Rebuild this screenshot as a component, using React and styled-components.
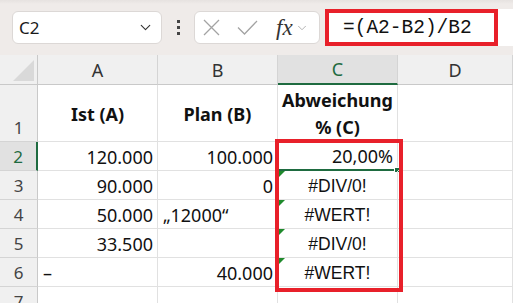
import React from "react";
import styled, { createGlobalStyle } from "styled-components";
import { ChevronDown } from "lucide-react";

const GlobalStyle = createGlobalStyle`
  html, body {
    margin: 0;
    padding: 0;
    width: 513px;
    height: 303px;
    overflow: hidden;
    background: #ffffff;
    font-family: "Noto Sans", "Open Sans", sans-serif;
  }
`;

const Page = styled.div`
  width: 513px;
  height: 303px;
  overflow: hidden;
  display: flex;
  flex-direction: column;
`;

const Toolbar = styled.div`
  height: 55px;
  flex: none;
  box-sizing: border-box;
  background: linear-gradient(#e6e2e0 0, #efebe9 4px, #efebe9 100%);
  display: flex;
  align-items: center;
  padding: 0 0 0 12px;
`;

const NameBox = styled.div`
  width: 150px;
  height: 33px;
  box-sizing: border-box;
  background: #fff;
  border: 1px solid #dcd8d6;
  border-radius: 6px;
  display: flex;
  align-items: center;
  justify-content: space-between;
  padding: 0 7px 0 6px;
  font-size: 17px;
  color: #1a1a1a;
`;

const Grip = styled.div`
  width: 32px;
  display: flex;
  flex-direction: column;
  align-items: center;
  gap: 3px;

  span {
    width: 3px;
    height: 3px;
    background: #444;
  }
`;

const FnControls = styled.div`
  width: 126px;
  height: 33px;
  box-sizing: border-box;
  background: #fff;
  border: 1px solid #dcd8d6;
  border-radius: 6px;
  display: flex;
  align-items: center;
  padding: 0 0 0 8px;
  color: #a3a3a3;
  gap: 0;
`;

const Fx = styled.span`
  font-family: "Liberation Serif", serif;
  font-style: italic;
  font-size: 23px;
  color: #333;
  margin: 0 2px 0 18px;
  line-height: 1;
`;

const FormulaBar = styled.div`
  flex: 1;
  height: 37px;
  margin-left: 5px;
  background: #fff;
  display: flex;
  align-items: stretch;
`;

const FormulaText = styled.div`
  width: 173px;
  box-sizing: border-box;
  border: 4.5px solid #e8202a;
  font-family: "Liberation Mono", monospace;
  font-size: 19.5px;
  color: #111;
  display: flex;
  align-items: center;
  padding-left: 14px;
`;

const Sheet = styled.div`
  position: relative;
  flex: 1;
  display: grid;
  grid-template-columns: 38px 120px 120px 120px 1fr;
  grid-template-rows: 30px 57px repeat(6, 29px);
  background: #fff;
`;

const Corner = styled.div`
  background: #f0f0f0;
  border-right: 1px solid #c9c9c9;
  border-bottom: 1px solid #c9c9c9;
  position: relative;

  &::after {
    content: "";
    position: absolute;
    right: 3px;
    bottom: 3px;
    width: 0;
    height: 0;
    border-left: 21px solid transparent;
    border-bottom: 21px solid #d9d9d9;
  }
`;

const ColHead = styled.div`
  background: ${(p) => (p.$active ? "#e1e1e1" : "#f0f0f0")};
  border-right: 1px solid #d4d4d4;
  border-bottom: ${(p) => (p.$active ? "2px solid #1e6b40" : "1px solid #c9c9c9")};
  color: ${(p) => (p.$active ? "#1e6b40" : "#333")};
  font-size: 18px;
  display: flex;
  align-items: center;
  justify-content: center;
`;

const RowHead = styled.div`
  background: ${(p) => (p.$active ? "#e1e1e1" : "#f0f0f0")};
  border-right: ${(p) => (p.$active ? "2px solid #1e6b40" : "1px solid #c9c9c9")};
  border-bottom: 1px solid #d4d4d4;
  color: ${(p) => (p.$active ? "#1e6b40" : "#444")};
  font-size: 17px;
  line-height: 18px;
  display: flex;
  align-items: flex-end;
  justify-content: center;
  padding-bottom: 4px;
  box-sizing: border-box;
`;

const Cell = styled.div`
  position: relative;
  box-sizing: border-box;
  border-right: 1px solid #e1e1e1;
  border-bottom: 1px solid #e1e1e1;
  padding: 0 4px 4px 5px;
  display: flex;
  align-items: flex-end;
  justify-content: ${(p) =>
    p.$align === "left" ? "flex-start" : p.$align === "center" ? "center" : "flex-end"};
  font-size: 18px;
  line-height: 18px;
  color: #111;
  white-space: nowrap;
`;

const HeadCell = styled(Cell)`
  align-items: center;
  justify-content: center;
  text-align: center;
  white-space: normal;
  font-weight: 700;
  line-height: 27px;
  padding: 2px 2px 0;
`;

const ErrorCell = styled(Cell)`
  font-family: "Liberation Sans", Arial, sans-serif;
  font-size: 17.5px;
  justify-content: center;
  padding-left: 0;
  padding-right: 0;

  &::before {
    content: "";
    position: absolute;
    left: 0;
    top: 0;
    border-top: 7px solid #1f8a2c;
    border-right: 7px solid transparent;
  }
`;

const ActiveCell = styled(Cell)`
  border-bottom: 2px solid #1e6b40;

  &::after {
    content: "";
    position: absolute;
    right: -3px;
    bottom: -4px;
    width: 6px;
    height: 6px;
    background: #1e6b40;
    border: 1px solid #fff;
    box-sizing: border-box;
  }
`;

const Highlight = styled.div`
  position: absolute;
  left: 275px;
  top: 84px;
  width: 128px;
  height: 153px;
  box-sizing: border-box;
  border: 4.5px solid #e8202a;
  pointer-events: none;
`;

const CancelIcon = () => (
  <svg width="17" height="17" viewBox="0 0 17 17" fill="none" stroke="currentColor" strokeWidth="1.3">
    <path d="M1 1 16 16M16 1 1 16" />
  </svg>
);

const ConfirmIcon = () => (
  <svg width="21" height="15" viewBox="0 0 21 15" fill="none" stroke="currentColor" strokeWidth="1.3" style={{ marginLeft: 17 }}>
    <path d="M1 7.5 7.5 14 20 1" />
  </svg>
);

const rows = [
  { n: 2, a: "120.000", b: "100.000", c: "20,00%", active: true },
  { n: 3, a: "90.000", b: "0", c: "#DIV/0!" },
  { n: 4, a: "50.000", b: "„12000“", bAlign: "left", c: "#WERT!" },
  { n: 5, a: "33.500", b: "", c: "#DIV/0!" },
  { n: 6, a: "–", aAlign: "left", b: "40.000", c: "#WERT!" },
];

export default function App() {
  return (
    <Page>
      <GlobalStyle />
      <Toolbar>
        <NameBox>
          <span>C2</span>
          <ChevronDown size={17} strokeWidth={1.6} color="#333" />
        </NameBox>
        <Grip>
          <span />
          <span />
          <span />
        </Grip>
        <FnControls>
          <CancelIcon />
          <ConfirmIcon />
          <Fx>fx</Fx>
          <ChevronDown size={14} strokeWidth={1.4} />
        </FnControls>
        <FormulaBar>
          <FormulaText>=(A2-B2)/B2</FormulaText>
        </FormulaBar>
      </Toolbar>

      <Sheet>
        <Corner />
        <ColHead>A</ColHead>
        <ColHead>B</ColHead>
        <ColHead $active>C</ColHead>
        <ColHead>D</ColHead>

        <RowHead>1</RowHead>
        <HeadCell>Ist (A)</HeadCell>
        <HeadCell>Plan (B)</HeadCell>
        <HeadCell>Abweichung % (C)</HeadCell>
        <Cell />

        {rows.map((r) => (
          <React.Fragment key={r.n}>
            <RowHead $active={r.active}>{r.n}</RowHead>
            <Cell $align={r.aAlign}>{r.a}</Cell>
            <Cell $align={r.bAlign}>{r.b}</Cell>
            {r.active ? <ActiveCell>{r.c}</ActiveCell> : <ErrorCell>{r.c}</ErrorCell>}
            <Cell />
          </React.Fragment>
        ))}

        <RowHead>7</RowHead>
        <Cell />
        <Cell />
        <Cell />
        <Cell />

        <Highlight />
      </Sheet>
    </Page>
  );
}
